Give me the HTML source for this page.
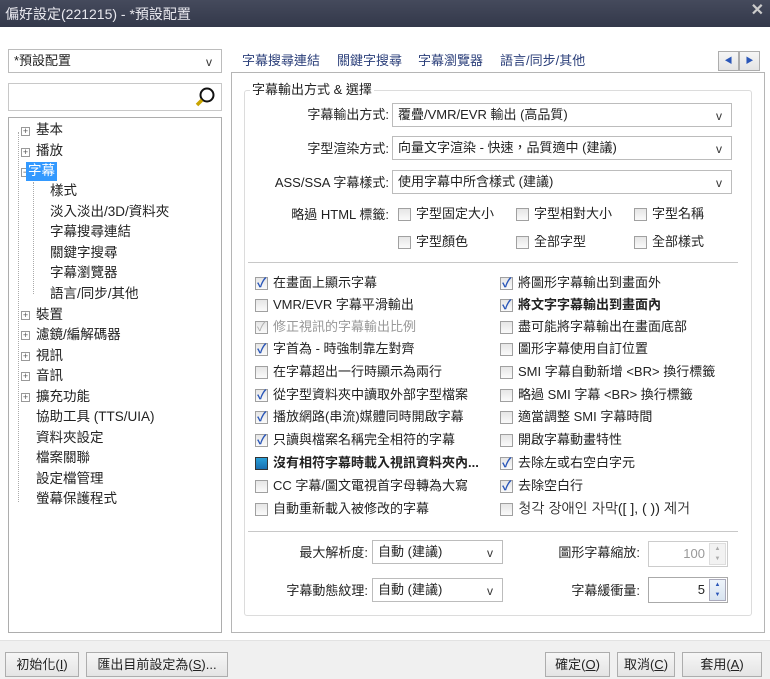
<!DOCTYPE html>
<html><head><meta charset="utf-8"><style>
*{box-sizing:border-box;margin:0;padding:0}
body{width:770px;height:679px;position:relative;overflow:hidden;background:#fff;font-family:"Liberation Sans","Noto Sans CJK TC",sans-serif;font-size:13px;line-height:16px;color:#222}
.a{position:absolute;white-space:nowrap}
.title{left:0;top:0;width:770px;height:27px;background:linear-gradient(#454a5c,#33384a);color:#e8e8ee;font-size:14px;padding:6px 0 0 5px}
.dd{position:absolute;border:1px solid #bcbcbc;background:#fff;padding:3px 5px;height:24px}
.dd:after{content:"v";position:absolute;right:9px;top:4px;color:#333;font-size:12px}
.box{position:absolute;border:1px solid #adadad;background:#fff}
.cb{position:absolute;width:13px;height:13px;border:1px solid #a0a0a0;background:linear-gradient(#e6e6e6,#fafafa)}
.cb.c:after{content:"✓";position:absolute;left:1px;top:-3px;font-size:13px;color:#2a56b8;font-weight:bold}
.cb.g:after{content:"✓";position:absolute;left:1px;top:-3px;font-size:13px;color:#b0b0b0}
.btn{position:absolute;border:1px solid #adadad;background:linear-gradient(#f6f6f6,#e4e4e4);text-align:center;padding-top:4px;height:25px}
.tr{position:absolute;left:28px;font-size:13.5px;line-height:18px}
.pl{position:absolute;left:13px;width:9px;height:9px;border:1px solid #999;background:#fff;font-size:9px;line-height:7px;text-align:center;color:#555}
.sub{left:42px}
.lbl{position:absolute;text-align:right;width:160px}
</style></head><body>
<div class="a title">偏好設定(221215) - *預設配置<span style="position:absolute;right:6px;top:3px;font-weight:bold;font-size:16px;color:#ccc">✕</span></div>
<div style="position:absolute;left:0;top:640px;width:770px;height:39px;background:#f0f0f0;border-top:1px solid #e2e2e2"></div>

<div class="dd" style="left:8px;top:49px;width:214px">*預設配置</div>
<div class="box" style="left:8px;top:83px;width:214px;height:28px;border-color:#c8c8c8">
<svg style="position:absolute;right:5px;top:2px" width="22" height="22"><circle cx="13" cy="9" r="6.5" fill="#fff" stroke="#111" stroke-width="2"/><line x1="8" y1="14" x2="3" y2="19" stroke="#c8a400" stroke-width="3.5"/></svg></div>
<div class="box" style="left:8px;top:117px;width:214px;height:516px">
<div style="position:absolute;left:9px;top:14px;height:370px;border-left:1px dotted #aaa"></div>
<div style="position:absolute;left:24px;top:64px;height:112px;border-left:1px dotted #aaa"></div>
</div>
<div class="a" style="left:8px;top:118px">
<div class="pl" style="top:9px">+</div><div class="tr" style="top:3px">基本</div>
<div class="pl" style="top:30px">+</div><div class="tr" style="top:24px">播放</div>
<div class="pl" style="top:50px">−</div><div class="tr" style="top:44px;left:18px;background:#3399ff;color:#fff;padding:0 2px;height:19px">字幕</div>
<div class="tr sub" style="top:64px">樣式</div>
<div class="tr sub" style="top:85px">淡入淡出/3D/資料夾</div>
<div class="tr sub" style="top:105px">字幕搜尋連結</div>
<div class="tr sub" style="top:126px">關鍵字搜尋</div>
<div class="tr sub" style="top:146px">字幕瀏覽器</div>
<div class="tr sub" style="top:167px">語言/同步/其他</div>
<div class="pl" style="top:193px">+</div><div class="tr" style="top:188px">裝置</div>
<div class="pl" style="top:213px">+</div><div class="tr" style="top:208px">濾鏡/編解碼器</div>
<div class="pl" style="top:234px">+</div><div class="tr" style="top:229px">視訊</div>
<div class="pl" style="top:254px">+</div><div class="tr" style="top:249px">音訊</div>
<div class="pl" style="top:275px">+</div><div class="tr" style="top:270px">擴充功能</div>
<div class="tr" style="top:290px">協助工具 (TTS/UIA)</div>
<div class="tr" style="top:311px">資料夾設定</div>
<div class="tr" style="top:331px">檔案關聯</div>
<div class="tr" style="top:352px">設定檔管理</div>
<div class="tr" style="top:372px">螢幕保護程式</div>
</div>

<div class="a" style="left:242px;top:53px;color:#2b3f7a">字幕搜尋連結</div>
<div class="a" style="left:337px;top:53px;color:#2b3f7a">關鍵字搜尋</div>
<div class="a" style="left:418px;top:53px;color:#2b3f7a">字幕瀏覽器</div>
<div class="a" style="left:500px;top:53px;color:#2b3f7a">語言/同步/其他</div>
<div class="btn" style="left:718px;top:51px;width:21px;height:20px;padding:0;font-size:8px;color:#2a56b8;line-height:18px">◀</div>
<div class="btn" style="left:739px;top:51px;width:21px;height:20px;padding:0;font-size:8px;color:#2a56b8;line-height:18px">▶</div>
<div class="box" style="left:231px;top:72px;width:534px;height:561px;border-color:#b5b5b5"></div>
<div style="position:absolute;left:244px;top:90px;width:508px;height:526px;border:1px solid #dcdcdc;border-radius:3px"></div>
<div class="a" style="left:250px;top:82px;background:#fff;padding:0 2px">字幕輸出方式 &amp; 選擇</div>

<div class="lbl" style="left:229px;top:107px">字幕輸出方式:</div>
<div class="dd" style="left:392px;top:103px;width:340px">覆疊/VMR/EVR 輸出 (高品質)</div>
<div class="lbl" style="left:229px;top:141px">字型渲染方式:</div>
<div class="dd" style="left:392px;top:136px;width:340px">向量文字渲染 - 快速，品質適中 (建議)</div>
<div class="lbl" style="left:229px;top:175px">ASS/SSA 字幕樣式:</div>
<div class="dd" style="left:392px;top:170px;width:340px">使用字幕中所含樣式 (建議)</div>
<div class="lbl" style="left:229px;top:207px">略過 HTML 標籤:</div>
<div class="cb" style="left:398px;top:208px"></div><div class="a" style="left:416px;top:206px">字型固定大小</div>
<div class="cb" style="left:516px;top:208px"></div><div class="a" style="left:534px;top:206px">字型相對大小</div>
<div class="cb" style="left:634px;top:208px"></div><div class="a" style="left:652px;top:206px">字型名稱</div>
<div class="cb" style="left:398px;top:236px"></div><div class="a" style="left:416px;top:234px">字型顏色</div>
<div class="cb" style="left:516px;top:236px"></div><div class="a" style="left:534px;top:234px">全部字型</div>
<div class="cb" style="left:634px;top:236px"></div><div class="a" style="left:652px;top:234px">全部樣式</div>
<div style="position:absolute;left:248px;top:262px;width:490px;border-top:1px solid #c8c8c8"></div>

<div class="cb c" style="left:255px;top:277px"></div><div class="a" style="left:273px;top:275px">在畫面上顯示字幕</div>
<div class="cb" style="left:255px;top:299px"></div><div class="a" style="left:273px;top:297px">VMR/EVR 字幕平滑輸出</div>
<div class="cb g" style="left:255px;top:321px"></div><div class="a" style="left:273px;top:319px;color:#999">修正視訊的字幕輸出比例</div>
<div class="cb c" style="left:255px;top:343px"></div><div class="a" style="left:273px;top:341px">字首為 - 時強制靠左對齊</div>
<div class="cb" style="left:255px;top:366px"></div><div class="a" style="left:273px;top:364px">在字幕超出一行時顯示為兩行</div>
<div class="cb c" style="left:255px;top:389px"></div><div class="a" style="left:273px;top:387px">從字型資料夾中讀取外部字型檔案</div>
<div class="cb c" style="left:255px;top:411px"></div><div class="a" style="left:273px;top:409px">播放網路(串流)媒體同時開啟字幕</div>
<div class="cb c" style="left:255px;top:434px"></div><div class="a" style="left:273px;top:432px">只讀與檔案名稱完全相符的字幕</div>
<div class="cb" style="left:255px;top:457px;background:linear-gradient(#2aa0d8,#1a6fb0);border-color:#333"></div><div class="a" style="left:273px;top:455px;font-weight:bold">沒有相符字幕時載入視訊資料夾內...</div>
<div class="cb" style="left:255px;top:480px"></div><div class="a" style="left:273px;top:478px">CC 字幕/圖文電視首字母轉為大寫</div>
<div class="cb" style="left:255px;top:503px"></div><div class="a" style="left:273px;top:501px">自動重新載入被修改的字幕</div>

<div class="cb c" style="left:500px;top:277px"></div><div class="a" style="left:518px;top:275px">將圖形字幕輸出到畫面外</div>
<div class="cb c" style="left:500px;top:299px"></div><div class="a" style="left:518px;top:297px;font-weight:bold">將文字字幕輸出到畫面內</div>
<div class="cb" style="left:500px;top:321px"></div><div class="a" style="left:518px;top:319px">盡可能將字幕輸出在畫面底部</div>
<div class="cb" style="left:500px;top:343px"></div><div class="a" style="left:518px;top:341px">圖形字幕使用自訂位置</div>
<div class="cb" style="left:500px;top:366px"></div><div class="a" style="left:518px;top:364px">SMI 字幕自動新增 &lt;BR&gt; 換行標籤</div>
<div class="cb" style="left:500px;top:389px"></div><div class="a" style="left:518px;top:387px">略過 SMI 字幕 &lt;BR&gt; 換行標籤</div>
<div class="cb" style="left:500px;top:411px"></div><div class="a" style="left:518px;top:409px">適當調整 SMI 字幕時間</div>
<div class="cb" style="left:500px;top:434px"></div><div class="a" style="left:518px;top:432px">開啟字幕動畫特性</div>
<div class="cb c" style="left:500px;top:457px"></div><div class="a" style="left:518px;top:455px">去除左或右空白字元</div>
<div class="cb c" style="left:500px;top:480px"></div><div class="a" style="left:518px;top:478px">去除空白行</div>
<div class="cb" style="left:500px;top:503px"></div><div class="a" style="left:518px;top:500px;font-size:14px;font-family:'Liberation Sans','NanumGothic',sans-serif">청각 장애인 자막([ ], ( )) 제거</div>
<div style="position:absolute;left:248px;top:531px;width:490px;border-top:1px solid #c8c8c8"></div>

<div class="lbl" style="left:208px;top:545px">最大解析度:</div>
<div class="dd" style="left:372px;top:540px;width:131px">自動 (建議)</div>
<div class="lbl" style="left:208px;top:583px">字幕動態紋理:</div>
<div class="dd" style="left:372px;top:578px;width:131px">自動 (建議)</div>
<div class="lbl" style="left:480px;top:545px">圖形字幕縮放:</div>
<div class="box" style="left:648px;top:541px;width:80px;height:26px;border-color:#ccc"><span style="position:absolute;right:22px;top:4px;color:#999">100</span><div style="position:absolute;right:1px;top:1px;width:17px;height:22px;background:#f2f2f2;border:1px solid #ddd;font-size:6px;color:#aaa;text-align:center;line-height:10px">▲<br>▼</div></div>
<div class="lbl" style="left:480px;top:583px">字幕緩衝量:</div>
<div class="box" style="left:648px;top:577px;width:80px;height:26px;border-color:#aaa"><span style="position:absolute;right:22px;top:4px">5</span><div style="position:absolute;right:1px;top:1px;width:17px;height:22px;background:linear-gradient(#eef4fb,#d8e4f0);border:1px solid #aab;font-size:6px;color:#2a56b8;text-align:center;line-height:10px">▲<br>▼</div></div>

<div class="btn" style="left:5px;top:652px;width:74px">初始化(<u>I</u>)</div>
<div class="btn" style="left:86px;top:652px;width:142px">匯出目前設定為(<u>S</u>)...</div>
<div class="btn" style="left:545px;top:652px;width:65px">確定(<u>O</u>)</div>
<div class="btn" style="left:617px;top:652px;width:58px">取消(<u>C</u>)</div>
<div class="btn" style="left:682px;top:652px;width:80px">套用(<u>A</u>)</div>
</body></html>
